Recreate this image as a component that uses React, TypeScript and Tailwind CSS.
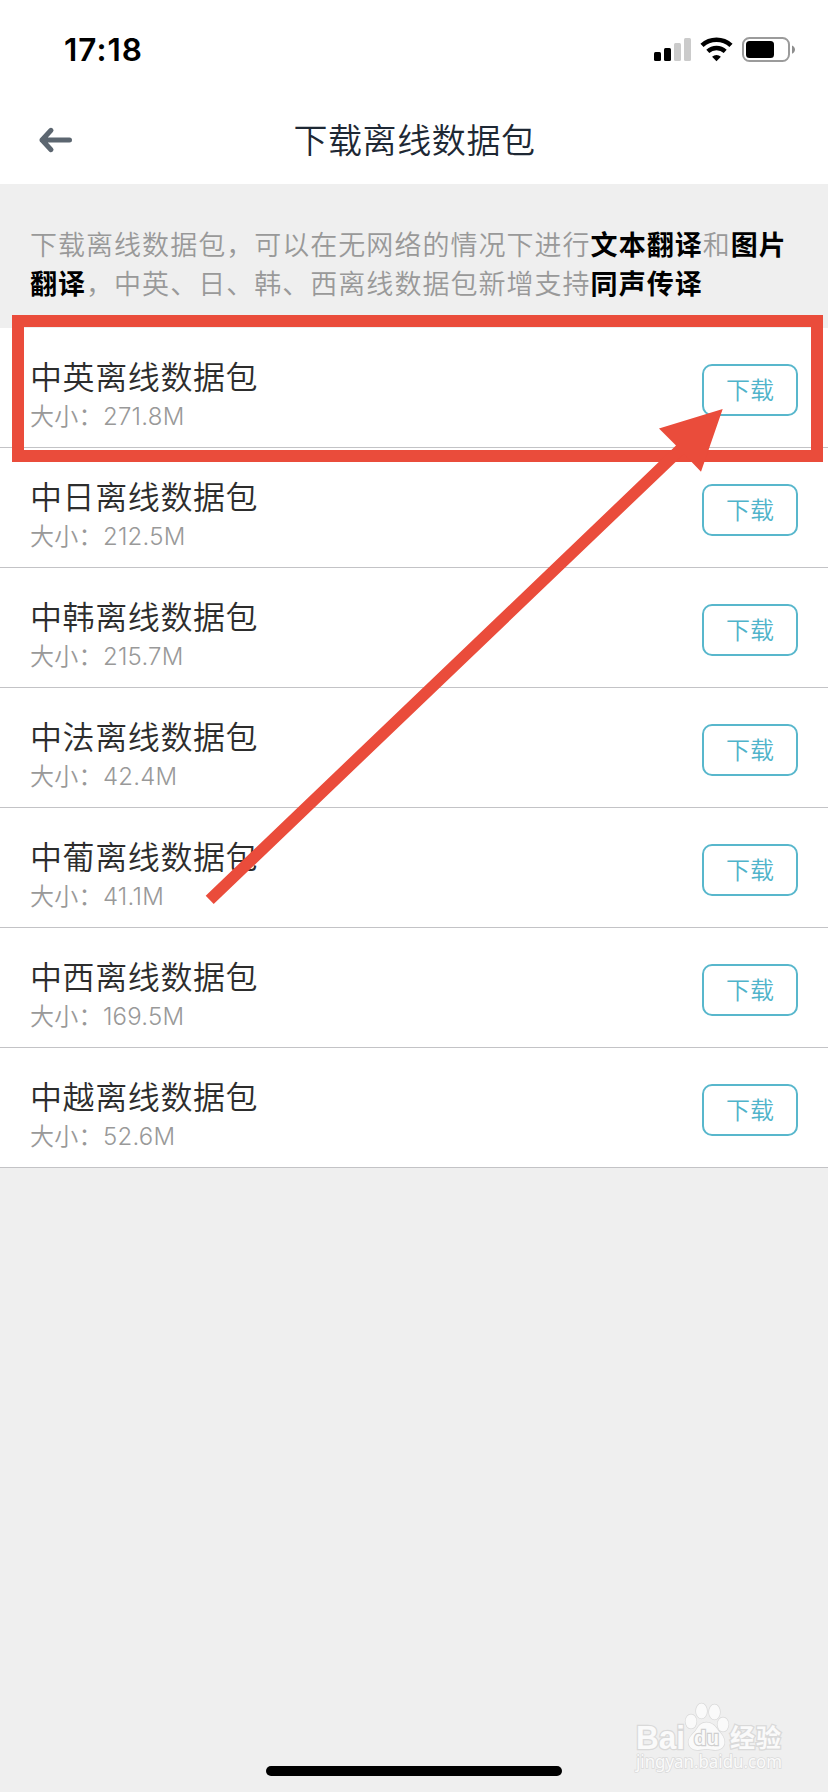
const packs = [
  { name: '中英离线数据包', size: '271.8M' },
  { name: '中日离线数据包', size: '212.5M' },
  { name: '中韩离线数据包', size: '215.7M' },
  { name: '中法离线数据包', size: '42.4M' },
  { name: '中葡离线数据包', size: '41.1M' },
  { name: '中西离线数据包', size: '169.5M' },
  { name: '中越离线数据包', size: '52.6M' },
];

function StatusIcons() {
  return (
    <svg width="144" height="28" viewBox="652 36 144 28" fill="none">
      <rect x="653" y="52" width="7" height="9" rx="1.5" fill="#000" />
      <rect x="663" y="48" width="7" height="13" rx="1.5" fill="#000" />
      <rect x="673" y="43" width="7" height="18" rx="1.5" fill="#cbcbcb" />
      <rect x="683" y="38" width="7" height="23" rx="1.5" fill="#cbcbcb" />
      <path d="M701 45.4a21.3 21.3 0 0 1 29 0" stroke="#000" strokeWidth="4.6" />
      <path d="M706.8 51.4a13 13 0 0 1 17.4 0" stroke="#000" strokeWidth="4.4" />
      <path d="M715.5 61.2l-4.4-4.5a6.6 6.6 0 0 1 8.8 0z" fill="#000" />
      <rect x="742" y="38" width="46" height="23" rx="6.5" stroke="#9b9b9b" strokeWidth="2" />
      <rect x="745" y="41" width="28" height="17" rx="3.5" fill="#000" />
      <path d="M791 45.6c4 1.6 4 6.6 0 8.2z" fill="#8e8e8e" />
    </svg>
  );
}

function Header() {
  return (
    <header className="bg-white">
      <div className="flex h-24 items-center justify-between pl-16 pr-[31px] pt-1">
        <span className="text-[31.5px] font-semibold leading-none tracking-[1px] text-black">17:18</span>
        <StatusIcons />
      </div>
      <div className="grid h-[88px] grid-cols-[1fr_auto_1fr] items-center">
        <svg className="ml-[38px]" width="36" height="28" viewBox="0 0 36 28" fill="none" stroke="#5c6670" strokeWidth="5" strokeLinecap="round" strokeLinejoin="round">
          <path d="M31.5 14H4M13 4.3 4 14l9 9.7" />
        </svg>
        <h1 className="pl-px pt-px text-[34px] font-[350] leading-none tracking-[0.6px] text-[#1e2834]">下载离线数据包</h1>
      </div>
    </header>
  );
}

function PackRow({ name, size }: { name: string; size: string }) {
  return (
    <li className="flex h-[120px] items-center justify-between border-b border-[#c3c3c6] bg-white px-[30px]">
      <div className="flex flex-col gap-[3px] pt-[19px]">
        <span className="text-[32px] font-[350] leading-9 tracking-[0.6px] text-[#2d2d2d]">{name}</span>
        <span className="text-[24px] font-[350] leading-9 tracking-[0.3px] text-[#999]">
          大小：<span className="font-[350] tracking-[0.25px]">{size}</span>
        </span>
      </div>
      <button className="mt-1 flex h-[52px] w-24 items-center justify-center rounded-[10px] border-2 border-[#58b7cc] pt-[2px] text-[24px] font-[350] leading-none text-[#4fb3ca]">
        下载
      </button>
    </li>
  );
}

function Watermark() {
  return (
    <svg className="absolute left-[630px] top-[1698px]" width="160" height="80" viewBox="630 1698 160 80" fill="#fafafa" stroke="#d9d9d9" strokeWidth="1.4" paintOrder="stroke">
      <g strokeWidth="2.6">
        <text x="636" y="1749" fontSize="33" fontWeight="700" textLength="49" lengthAdjust="spacingAndGlyphs" fontFamily="Liberation Sans, sans-serif">Bai</text>
        <text x="730" y="1747" fontSize="25" fontWeight="700" textLength="51" fontFamily="Noto Sans CJK SC, sans-serif">经验</text>
      </g>
      <ellipse cx="691" cy="1721.5" rx="5.5" ry="7" />
      <ellipse cx="701.5" cy="1711" rx="5.5" ry="7.5" />
      <ellipse cx="714.5" cy="1712" rx="5.5" ry="7.5" />
      <ellipse cx="723" cy="1724.5" rx="5.5" ry="7" />
      <path d="M706.5 1722.5c6 0 9 4 12 8.5 4 4 6 7 6 11 0 5-4 8-9 8-3 0-6-1-9-1s-6 1-9 1c-5 0-9-3-9-8 0-4 3-7 7-11 3-4.5 5-8.500 11-8.500z" />
      <text x="694" y="1745" fontSize="20" fontWeight="700" textLength="25" strokeWidth="2.4" stroke="#cfcfcf" fontFamily="Liberation Sans, sans-serif">du</text>
      <text x="636" y="1768" fontSize="18" textLength="146" lengthAdjust="spacingAndGlyphs" strokeWidth="1.6" stroke="#dadada" fontFamily="Noto Sans, sans-serif">jingyan.baidu.com</text>
    </svg>
  );
}

export default function App() {
  return (
    <div className="relative flex h-[1792px] w-[828px] flex-col overflow-hidden bg-[#efefef] font-['Inter','Noto_Sans_CJK_SC',sans-serif]">
      <Header />
      <p className="h-36 whitespace-nowrap px-[30px] pt-[42px] text-[27px] font-[350] leading-[39px] tracking-[1.03px] text-[#999]">
        下载离线数据包，可以在无网络的情况下进行<b className="font-bold text-black">文本翻译</b>和<b className="font-bold text-black">图片</b>
        <br />
        <b className="font-bold text-black">翻译</b>，中英、日、韩、西离线数据包新增支持<b className="font-bold text-black">同声传译</b>
      </p>
      <ul>
        {packs.map((pack) => (
          <PackRow key={pack.name} {...pack} />
        ))}
      </ul>
      <div className="mb-4 mt-auto h-[10px] w-[296px] self-center rounded-full bg-black" />
      <div className="absolute left-3 top-[315px] h-[147px] w-[811px] border-[12px] border-[#ea4c3b]" />
      <svg className="absolute left-0 top-0" width="828" height="920" viewBox="0 0 828 920">
        <path d="M722.7 409 659 428.5 676 445.6 205.7 895.7 213.7 904 684 453.9 701 471.7z" fill="#ea4c3b" />
      </svg>
      <Watermark />
    </div>
  );
}
